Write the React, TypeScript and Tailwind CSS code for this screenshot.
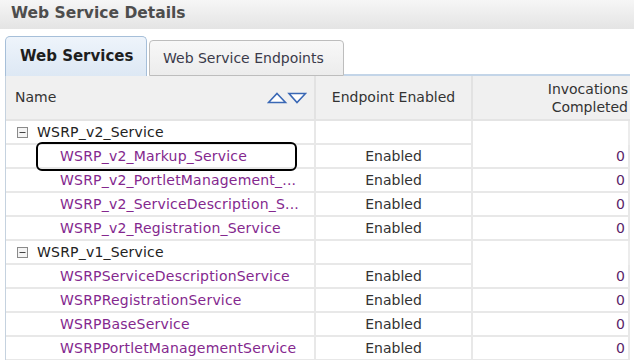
const font = { fontFamily: "Tahoma, 'DejaVu Sans', Verdana, sans-serif" };

type Row = { name: string; group?: boolean; enabled?: string; count?: string };

const rows: Row[] = [
  { name: "WSRP_v2_Service", group: true },
  { name: "WSRP_v2_Markup_Service", enabled: "Enabled", count: "0" },
  { name: "WSRP_v2_PortletManagement_...", enabled: "Enabled", count: "0" },
  { name: "WSRP_v2_ServiceDescription_S...", enabled: "Enabled", count: "0" },
  { name: "WSRP_v2_Registration_Service", enabled: "Enabled", count: "0" },
  { name: "WSRP_v1_Service", group: true },
  { name: "WSRPServiceDescriptionService", enabled: "Enabled", count: "0" },
  { name: "WSRPRegistrationService", enabled: "Enabled", count: "0" },
  { name: "WSRPBaseService", enabled: "Enabled", count: "0" },
  { name: "WSRPPortletManagementService", enabled: "Enabled", count: "0" },
];

function MinusBox() {
  return (
    <svg width="11" height="11" viewBox="0 0 11 11" className="shrink-0">
      <rect x="0.5" y="0.5" width="10" height="10" fill="#f4f4f4" stroke="#8a8a8a" />
      <line x1="2.5" y1="5.5" x2="8.5" y2="5.5" stroke="#444" strokeWidth="1" />
    </svg>
  );
}

function SortArrows() {
  return (
    <svg width="40" height="12" viewBox="0 0 40 12">
      <path d="M10 1.5 L18.5 10.5 L1.5 10.5 Z" fill="#fff" stroke="#3a68b5" strokeWidth="1.6" />
      <path d="M22 1.5 L38.5 1.5 L30 10.5 Z" fill="#fff" stroke="#3a68b5" strokeWidth="1.6" />
    </svg>
  );
}

export default function App() {
  return (
    <div className="w-[634px] h-[360px] overflow-hidden bg-white relative" style={font}>
      <div className="h-[29px] bg-gradient-to-b from-[#f6f6f6] to-[#e4e4e4] flex items-center pl-[11px] pb-[2px]">
        <span className="text-[15.5px] font-bold text-[#4d4d4d]">Web Service Details</span>
      </div>

      <div className="flex items-end h-[47px] pl-[5px] pt-[7px]">
        <div className="w-[142px] h-[40px] rounded-t-[5px] border border-b-0 border-[#a6bfd9] bg-gradient-to-b from-[#eef4fb] to-[#dde8f4] flex items-center pl-[14px]">
          <span className="text-[15px] font-bold text-[#1e1e1e]">Web Services</span>
        </div>
        <div className="ml-[2px] w-[195px] h-[36px] rounded-t-[4px] border border-[#bdbdbd] bg-gradient-to-b from-[#f8f8f8] to-[#ececec] flex items-center pl-[13px]">
          <span className="text-[14px] text-[#3a3a4a]">Web Service Endpoints</span>
        </div>
        <div className="flex-1 h-[36px] border-b-2 border-[#c3d5e8] mr-[4px]" />
      </div>

      <div className="ml-[5px] w-[625px] border-l border-[#c5d2df]">
        <div className="flex h-[45px] bg-[#f0f0f0] border-b-2 border-[#e4e4e4] text-[14px] text-[#333]">
          <div className="w-[310px] flex items-center justify-between pl-[9px] pr-[7px] border-r-2 border-[#e2e2e2]">
            <span>Name</span>
            <SortArrows />
          </div>
          <div className="w-[157px] flex items-center justify-center border-r-2 border-[#e2e2e2]">
            Endpoint Enabled
          </div>
          <div className="flex-1 flex flex-col justify-center items-end pr-[2px] leading-[18px]">
            <span>Invocations</span>
            <span>Completed</span>
          </div>
        </div>

        {rows.map((r) => (
          <div key={r.name} className="flex h-[24px] text-[14px]">
            <div
              className={
                r.group
                  ? "w-[310px] overflow-hidden flex items-center gap-[9px] pl-[11px] border-b-2 border-r-2 border-[#e8e8e8] text-[#222] tracking-[0.2px]"
                  : "w-[310px] overflow-hidden flex items-center pl-[54px] border-b-2 border-r-2 border-[#e8e8e8] text-[#84288e] tracking-[0.2px]"
              }
            >
              {r.group && <MinusBox />}
              <span className="whitespace-nowrap">{r.name}</span>
            </div>
            <div className="w-[157px] flex items-center justify-center border-b-2 border-r-2 border-[#e8e8e8] text-[#333]">
              {r.enabled}
            </div>
            <div
              className={
                r.group
                  ? "flex-1 flex items-center justify-end pr-[3px] border-r-2 border-[#ececec]"
                  : "flex-1 flex items-center justify-end pr-[3px] border-b-2 border-r-2 border-[#e8e8e8] text-[#5a1f6a]"
              }
            >
              {r.count}
            </div>
          </div>
        ))}
      </div>

      <div className="absolute left-[36px] top-[142px] w-[261px] h-[29px] border-2 border-black rounded-[6px]" />
    </div>
  );
}
